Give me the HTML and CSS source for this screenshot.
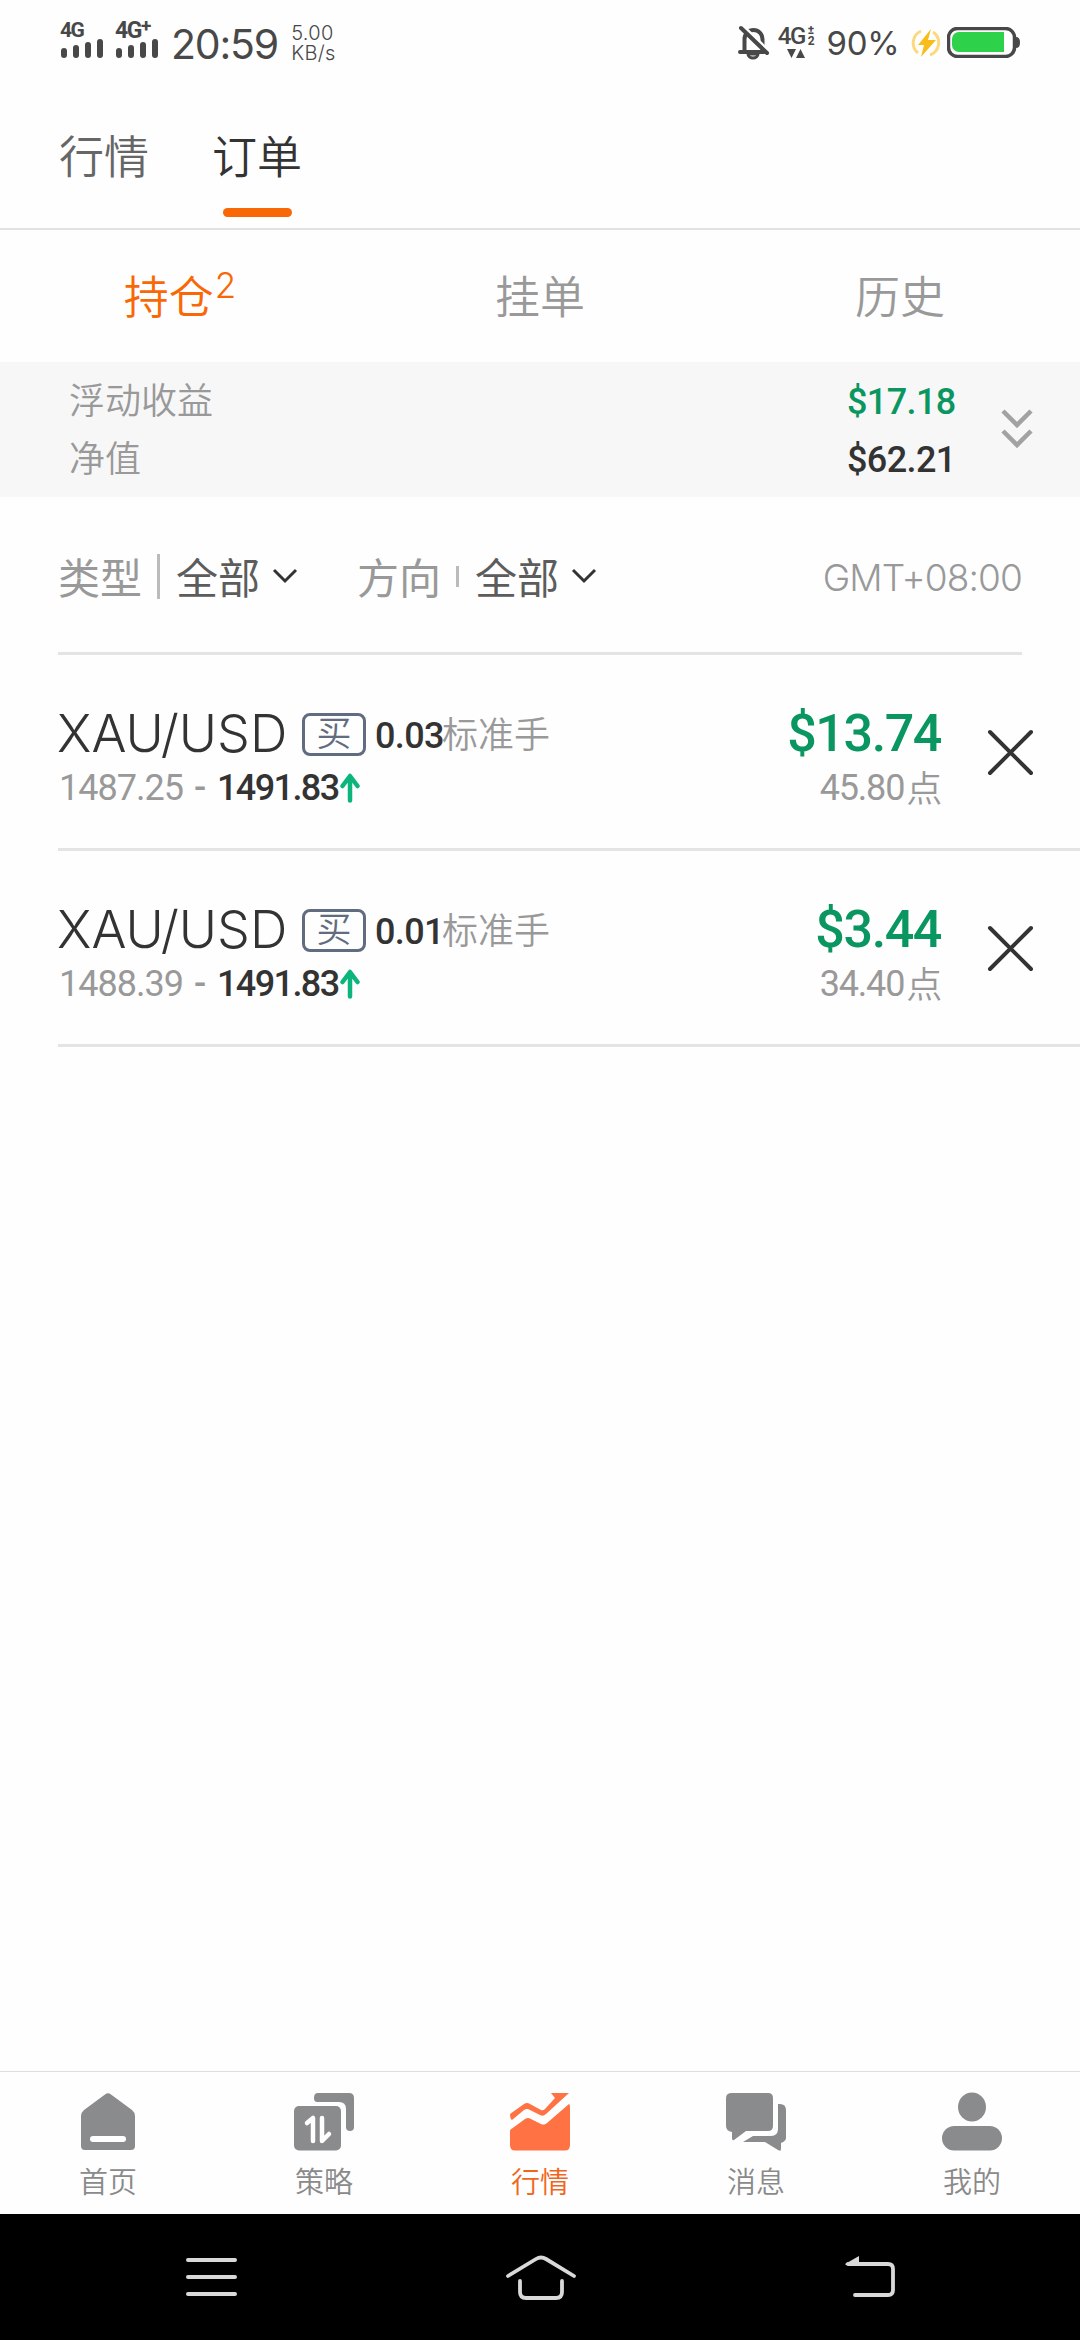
FILE: index.html
```html
<!DOCTYPE html>
<html lang="zh-CN">
<head>
<meta charset="utf-8">
<title>订单</title>
<link rel="stylesheet" href="styles.css">
</head>
<body>
<div class="screen">
  <header class="status">
    <div class="signal">
      <span class="net">4G</span>
      <svg width="43" height="20" viewBox="0 0 43 20" stroke="#484848" stroke-width="6" stroke-linecap="round"><path d="M4 13v4M16 10v7M28 7v10M40 4v13"/></svg>
    </div>
    <div class="signal plus">
      <span class="net">4G<sup>+</sup></span>
      <svg width="43" height="20" viewBox="0 0 43 20" stroke="#484848" stroke-width="6" stroke-linecap="round"><path d="M4 13v4M16 10v7M28 7v10M40 4v13"/></svg>
    </div>
    <span class="clock">20:59</span>
    <span class="speed">5.00<br>KB/s</span>
    <svg class="bell" width="32" height="36" viewBox="0 0 32 36" fill="none" stroke="#484848"><path d="M6.500 26V14a9 9 0 0 1 18 0v12M2 27h24" stroke-width="4" stroke-linecap="round"/><path d="M10 29a5 4 0 0 0 10 0z" stroke-width="3"/><path d="M5 1l26 25" stroke="#fff" stroke-width="3"/><path d="M3 3l26 25" stroke-width="4" stroke-linecap="round"/></svg>
    <div class="data">
      <span class="data-name">4G<span class="data-marks"><i>±</i><i>2</i></span></span>
      <svg width="18" height="9" viewBox="0 0 18 9" fill="#484848"><path d="M0 0h9L4.500 9zM9 9h9L13.500 0z"/></svg>
    </div>
    <span class="percent">90%</span>
    <svg class="bolt" width="30" height="30" viewBox="0 0 30 30"><path d="M10 3A13 13 0 0 0 7 25M22 4A13 13 0 0 1 19 27" fill="none" stroke="#fbd97c" stroke-width="3"/><path d="M20 1L7 17h6l-3 12 15-17h-8z" fill="#f9bd1b"/></svg>
    <svg class="battery" width="73" height="31" viewBox="0 0 73 31"><rect x="1.500" y="1.500" width="66" height="28" rx="9" fill="#fff" stroke="#484848" stroke-width="3.500"/><path d="M12 5h45v20H12a7 7 0 0 1-7-7v-6a7 7 0 0 1 7-7z" fill="#2dd14a"/><path d="M69 10q4 0 4 5.500T69 21z" fill="#484848"/></svg>
  </header>

  <nav class="tabs">
    <span class="tab">行情</span>
    <span class="tab active">订单</span>
  </nav>

  <nav class="subtabs">
    <span class="subtab active">持仓<sup>2</sup></span>
    <span class="subtab">挂单</span>
    <span class="subtab">历史</span>
  </nav>

  <section class="summary">
    <div class="summary-rows">
      <div class="summary-row"><span>浮动收益</span><b class="num gain">$17.18</b></div>
      <div class="summary-row"><span>净值</span><b class="num">$62.21</b></div>
    </div>
    <svg width="34" height="42" viewBox="0 0 34 42" fill="none" stroke="#a2a2a2" stroke-width="4.500"><path d="M3 3l14 14L31 3M3 23l14 14L31 23"/></svg>
  </section>

  <section class="filters">
    <span class="filter-name">类型</span><i class="bar tall"></i><span class="filter-value">全部</span>
    <svg class="caret" width="26" height="16" viewBox="0 0 26 16" fill="none" stroke="#333" stroke-width="3"><path d="M2 2l11 11L24 2"/></svg>
    <span class="filter-name second">方向</span><i class="bar short"></i><span class="filter-value">全部</span>
    <svg class="caret" width="26" height="16" viewBox="0 0 26 16" fill="none" stroke="#333" stroke-width="3"><path d="M2 2l11 11L24 2"/></svg>
    <span class="zone">GMT+08:00</span>
  </section>

  <main class="orders">
    <article class="order">
      <div class="info">
        <div class="line-one"><span class="pair">XAU/USD</span><span class="side">买</span><b class="num lots">0.03</b><span class="unit">标准手</span></div>
        <div class="line-two"><span class="open">1487.25</span><span class="dash">-</span><b class="num now">1491.83</b><svg width="20" height="30" viewBox="0 0 20 30" fill="none" stroke="#0bb57b" stroke-width="4.500" stroke-linecap="round" stroke-linejoin="round"><path d="M10 27.500V4M2.500 13L10 3l7.500 10"/></svg></div>
      </div>
      <div class="result">
        <b class="profit">$13.74</b>
        <div class="points"><span>45.80</span><span class="unit">点</span></div>
      </div>
      <svg class="close" width="48" height="48" viewBox="0 0 48 48" stroke="#333" stroke-width="4" stroke-linecap="round"><path d="M4 4l41 41M45 4L4 45"/></svg>
    </article>
    <article class="order">
      <div class="info">
        <div class="line-one"><span class="pair">XAU/USD</span><span class="side">买</span><b class="num lots">0.01</b><span class="unit">标准手</span></div>
        <div class="line-two"><span class="open">1488.39</span><span class="dash">-</span><b class="num now">1491.83</b><svg width="20" height="30" viewBox="0 0 20 30" fill="none" stroke="#0bb57b" stroke-width="4.500" stroke-linecap="round" stroke-linejoin="round"><path d="M10 27.500V4M2.500 13L10 3l7.500 10"/></svg></div>
      </div>
      <div class="result">
        <b class="profit">$3.44</b>
        <div class="points"><span>34.40</span><span class="unit">点</span></div>
      </div>
      <svg class="close" width="48" height="48" viewBox="0 0 48 48" stroke="#333" stroke-width="4" stroke-linecap="round"><path d="M4 4l41 41M45 4L4 45"/></svg>
    </article>
  </main>

  <nav class="dock">
    <a class="dock-item"><svg width="60" height="60" viewBox="0 0 60 60"><path d="M27 2.500q3-2.500 6 0L54 18q3 2.500 3 6v30q0 4-4 4H7q-4 0-4-4V24q0-3.500 3-6z" fill="#898b8d"/><path d="M15 47h30" stroke="#fff" stroke-width="6" stroke-linecap="round"/></svg><span>首页</span></a>
    <a class="dock-item"><svg width="60" height="60" viewBox="0 0 60 60" fill="#898b8d"><path d="M24 1h31q5 0 5 5v29q0 4-4 4t-4-4V17q0-7-7-7H23q-3 0-3-4 0-5 4-5z"/><rect y="14" width="47" height="44.500" rx="5"/><path d="M13 31l6-5v23M28 26v23l7-7" fill="none" stroke="#fff" stroke-width="4.500" stroke-linecap="round" stroke-linejoin="round"/></svg><span>策略</span></a>
    <a class="dock-item current"><svg width="60" height="60" viewBox="0 0 60 60" fill="#ff7243"><path d="M0 22L14 12q3-2 6 0l11 6q2 1 4-1L45 6l-4-5h18L36 22q-3 3-6 1L20 18q-3-2-6 0L2 28q-2-1-2-6z"/><path d="M0 38L15 27q3-2 6 0l10 5q3 1.500 6-1L59 12q1 0 1 3v38q0 5.500-5 5.500H5q-5 0-5-5.500z"/></svg><span>行情</span></a>
    <a class="dock-item"><svg width="60" height="60" viewBox="0 0 60 60" fill="#898b8d"><path d="M6 1h36q5 0 5 5v28q0 5-5 5H20L8 48q-2 1-2-2v-6q-6-1-6-6V6q0-5 6-5z"/><path d="M52 12q8-1 8 6v28q0 3-5 5v6q0 3-3 1L39 50H17l10-6h18q7 0 7-7z"/></svg><span>消息</span></a>
    <a class="dock-item"><svg width="60" height="60" viewBox="0 0 60 60" fill="#898b8d"><ellipse cx="30" cy="15" rx="14" ry="14.500"/><rect y="34" width="60" height="24.500" rx="12.200"/></svg><span>我的</span></a>
  </nav>

  <footer class="system">
    <svg width="52" height="44" viewBox="0 0 52 44" stroke="#d9d9d9" stroke-width="4" stroke-linecap="round"><path d="M3 5h47M3 22h47M3 39h47"/></svg>
    <svg width="72" height="46" viewBox="0 0 72 46" fill="none" stroke="#d9d9d9" stroke-width="3.800" stroke-linecap="round"><path d="M3 21L31 4q5-3 10 0l28 17M15 26v11q0 6 6 6h30q6 0 6-6V26"/></svg>
    <svg width="52" height="44" viewBox="0 0 52 44" fill="none" stroke="#d9d9d9" stroke-width="3.800" stroke-linecap="round"><path d="M4 9h40q5 0 5 5v21q0 5-5 5H11"/><path d="M1 9L15 1v9H2z" fill="#d9d9d9" stroke="none"/></svg>
  </footer>
</div>
</body>
</html>
```

FILE: styles.css
```css
* { box-sizing: border-box; }
body { margin: 0; background: #fff; }
svg { display: block; flex: none; }
i { font-style: normal; }

.screen {
  width: 1080px;
  height: 2340px;
  display: flex;
  flex-direction: column;
  background: #fefefe;
  color: #333;
  font-family: Roboto, "Noto Sans CJK SC", sans-serif;
  font-weight: 350;
  white-space: nowrap;
}

/* status bar */
.status { height: 86px; display: flex; align-items: flex-start; padding: 0 60px; color: #484848; font-weight: 400; }
.signal { width: 43px; padding-top: 20px; }
.signal.plus { margin-left: 12px; }
.signal svg { margin-top: 1px; }
.net { display: block; height: 17px; font-weight: 700; font-size: 21px; line-height: 20px; letter-spacing: -1.5px; }
.signal.plus .net { font-size: 23px; line-height: 22px; }
.net sup { font-size: 19px; line-height: 0; vertical-align: 6px; }
.clock { margin-left: 13px; width: 121px; font: 400 41px/50px Inter, sans-serif; letter-spacing: -1.2px; padding-top: 19px; }
.speed { font: 350 20px/20px Inter, sans-serif; padding-top: 23px; width: 60px; letter-spacing: 0.3px; }
.bell { margin: 25px 0 0 387px; }
.data { width: 38px; margin-left: 8px; padding-top: 25px; }
.data svg { margin: 3px 0 0 9px; }
.data-name { display: flex; height: 21px; font-weight: 500; font-size: 24px; line-height: 22px; letter-spacing: -1.5px; }
.data-marks { display: flex; flex-direction: column; font-size: 12px; line-height: 11px; font-weight: 700; padding-left: 3px; }
.percent { margin-left: 11px; width: 84px; font: 400 33px/40px Inter, sans-serif; letter-spacing: -0.3px; padding-top: 23px; }
.bolt { margin: 28px 0 0 1px; }
.battery { margin: 27px 0 0 6px; }

/* top tabs */
.tabs { height: 144px; display: flex; gap: 63px; padding: 43px 0 0 59px; border-bottom: 2px solid #e2e2e2; font-size: 45px; line-height: 60px; color: #666; }
.tab { height: 88px; }
.tab.active { color: #333; display: flex; flex-direction: column; align-items: center; justify-content: space-between; }
.tab.active::after { content: ""; width: 69px; height: 9px; border-radius: 5px; background: #f96806; }

.subtabs { height: 132px; padding-top: 6px; display: grid; grid-template-columns: 1fr 1fr 1fr; align-items: center; text-align: center; font-size: 45px; line-height: 60px; color: #999; }
.subtab.active { color: #f96806; }
.subtab sup { font-family: Inter, sans-serif; font-weight: 300; font-size: 35px; line-height: 0; vertical-align: 16px; margin-left: 1px; }

/* account summary */
.summary { height: 135px; background: #f7f7f7; display: flex; padding: 11px 46px 0 69px; justify-content: space-between; }
.summary svg { margin-top: 35px; }
.summary-rows { width: 887px; font-size: 36px; color: #999; }
.summary-row { height: 58px; display: flex; justify-content: space-between; line-height: 58px; }
.summary-row .num { width: 109px; }
.num { font-weight: 500; font-size: 36px; color: #333; letter-spacing: -0.6px; }
.num.gain { color: #0a9660; }

/* filters */
.filters { height: 158px; margin: 0 58px; border-bottom: 3px solid #e4e4e4; display: flex; align-items: center; padding-top: 3px; font-size: 42px; line-height: 56px; }
.filter-name { color: #999; font-weight: 400; padding-top: 7px; }
.filter-value { color: #5c5c5c; font-weight: 400; padding-top: 7px; }
.filter-name.second { margin-left: 59px; }
.bar { width: 3px; background: #bbb; margin: 0 16px 0 15px; }
.bar.tall { height: 45px; }
.bar.short { height: 21px; }
.caret { margin-left: 12px; }
.zone { margin-left: auto; font-family: Inter, sans-serif; font-size: 37px; color: #999; padding-top: 4px; font-weight: 300; letter-spacing: -0.9px; }

/* orders */
.orders { flex: 1; padding-left: 58px; }
.order { height: 196px; display: flex; align-items: flex-start; border-bottom: 3px solid #e4e4e4; }
.info { width: 610px; }
.line-one { display: flex; align-items: center; height: 60px; margin-top: 49px; }
.pair { width: 245px; margin-left: -1px; font-family: Inter, sans-serif; font-size: 52px; line-height: 60px; letter-spacing: 0; font-weight: 300; }
.side { width: 64px; height: 43px; border: 3px solid #626c80; border-radius: 8px; color: #626c80; font-size: 35px; line-height: 38px; text-align: center; margin-right: 9px; }
.lots { width: 67px; padding-top: 3px; }
.unit { color: #999; font-size: 36px; line-height: 48px; padding-top: 3px; }
.line-two { display: flex; align-items: center; height: 48px; font-size: 36px; }
.open { width: 136px; color: #999; font-weight: 400; letter-spacing: -1px; padding-left: 1px; }
.dash { width: 23px; color: #999; font-weight: 500; }
.now { width: 122px; letter-spacing: -1.6px; }
.line-two svg { margin-left: 1px; }
.result { width: 273px; padding-top: 49px; text-align: right; }
.profit { display: block; font-size: 52px; line-height: 60px; font-weight: 500; color: #0a9660; letter-spacing: -1.4px; }
.points { display: flex; justify-content: flex-end; align-items: center; height: 48px; font-size: 36px; font-weight: 400; color: #999; letter-spacing: -1.2px; }
.points .unit { margin-left: 2px; font-weight: 350; }
.close { margin: 73px 0 0 45px; }

/* bottom navigation */
.dock { height: 143px; border-top: 1px solid #dedede; display: grid; grid-template-columns: repeat(5, 1fr); }
.dock-item { display: flex; flex-direction: column; align-items: center; padding-top: 20px; color: #8a8a8a; font-size: 29px; line-height: 40px; }
.dock-item span { margin-top: 11px; }
.dock-item.current { color: #f0661c; }

.system { height: 126px; background: #000; display: flex; align-items: flex-start; padding: 41px 184px 0 185px; justify-content: space-between; }
```
